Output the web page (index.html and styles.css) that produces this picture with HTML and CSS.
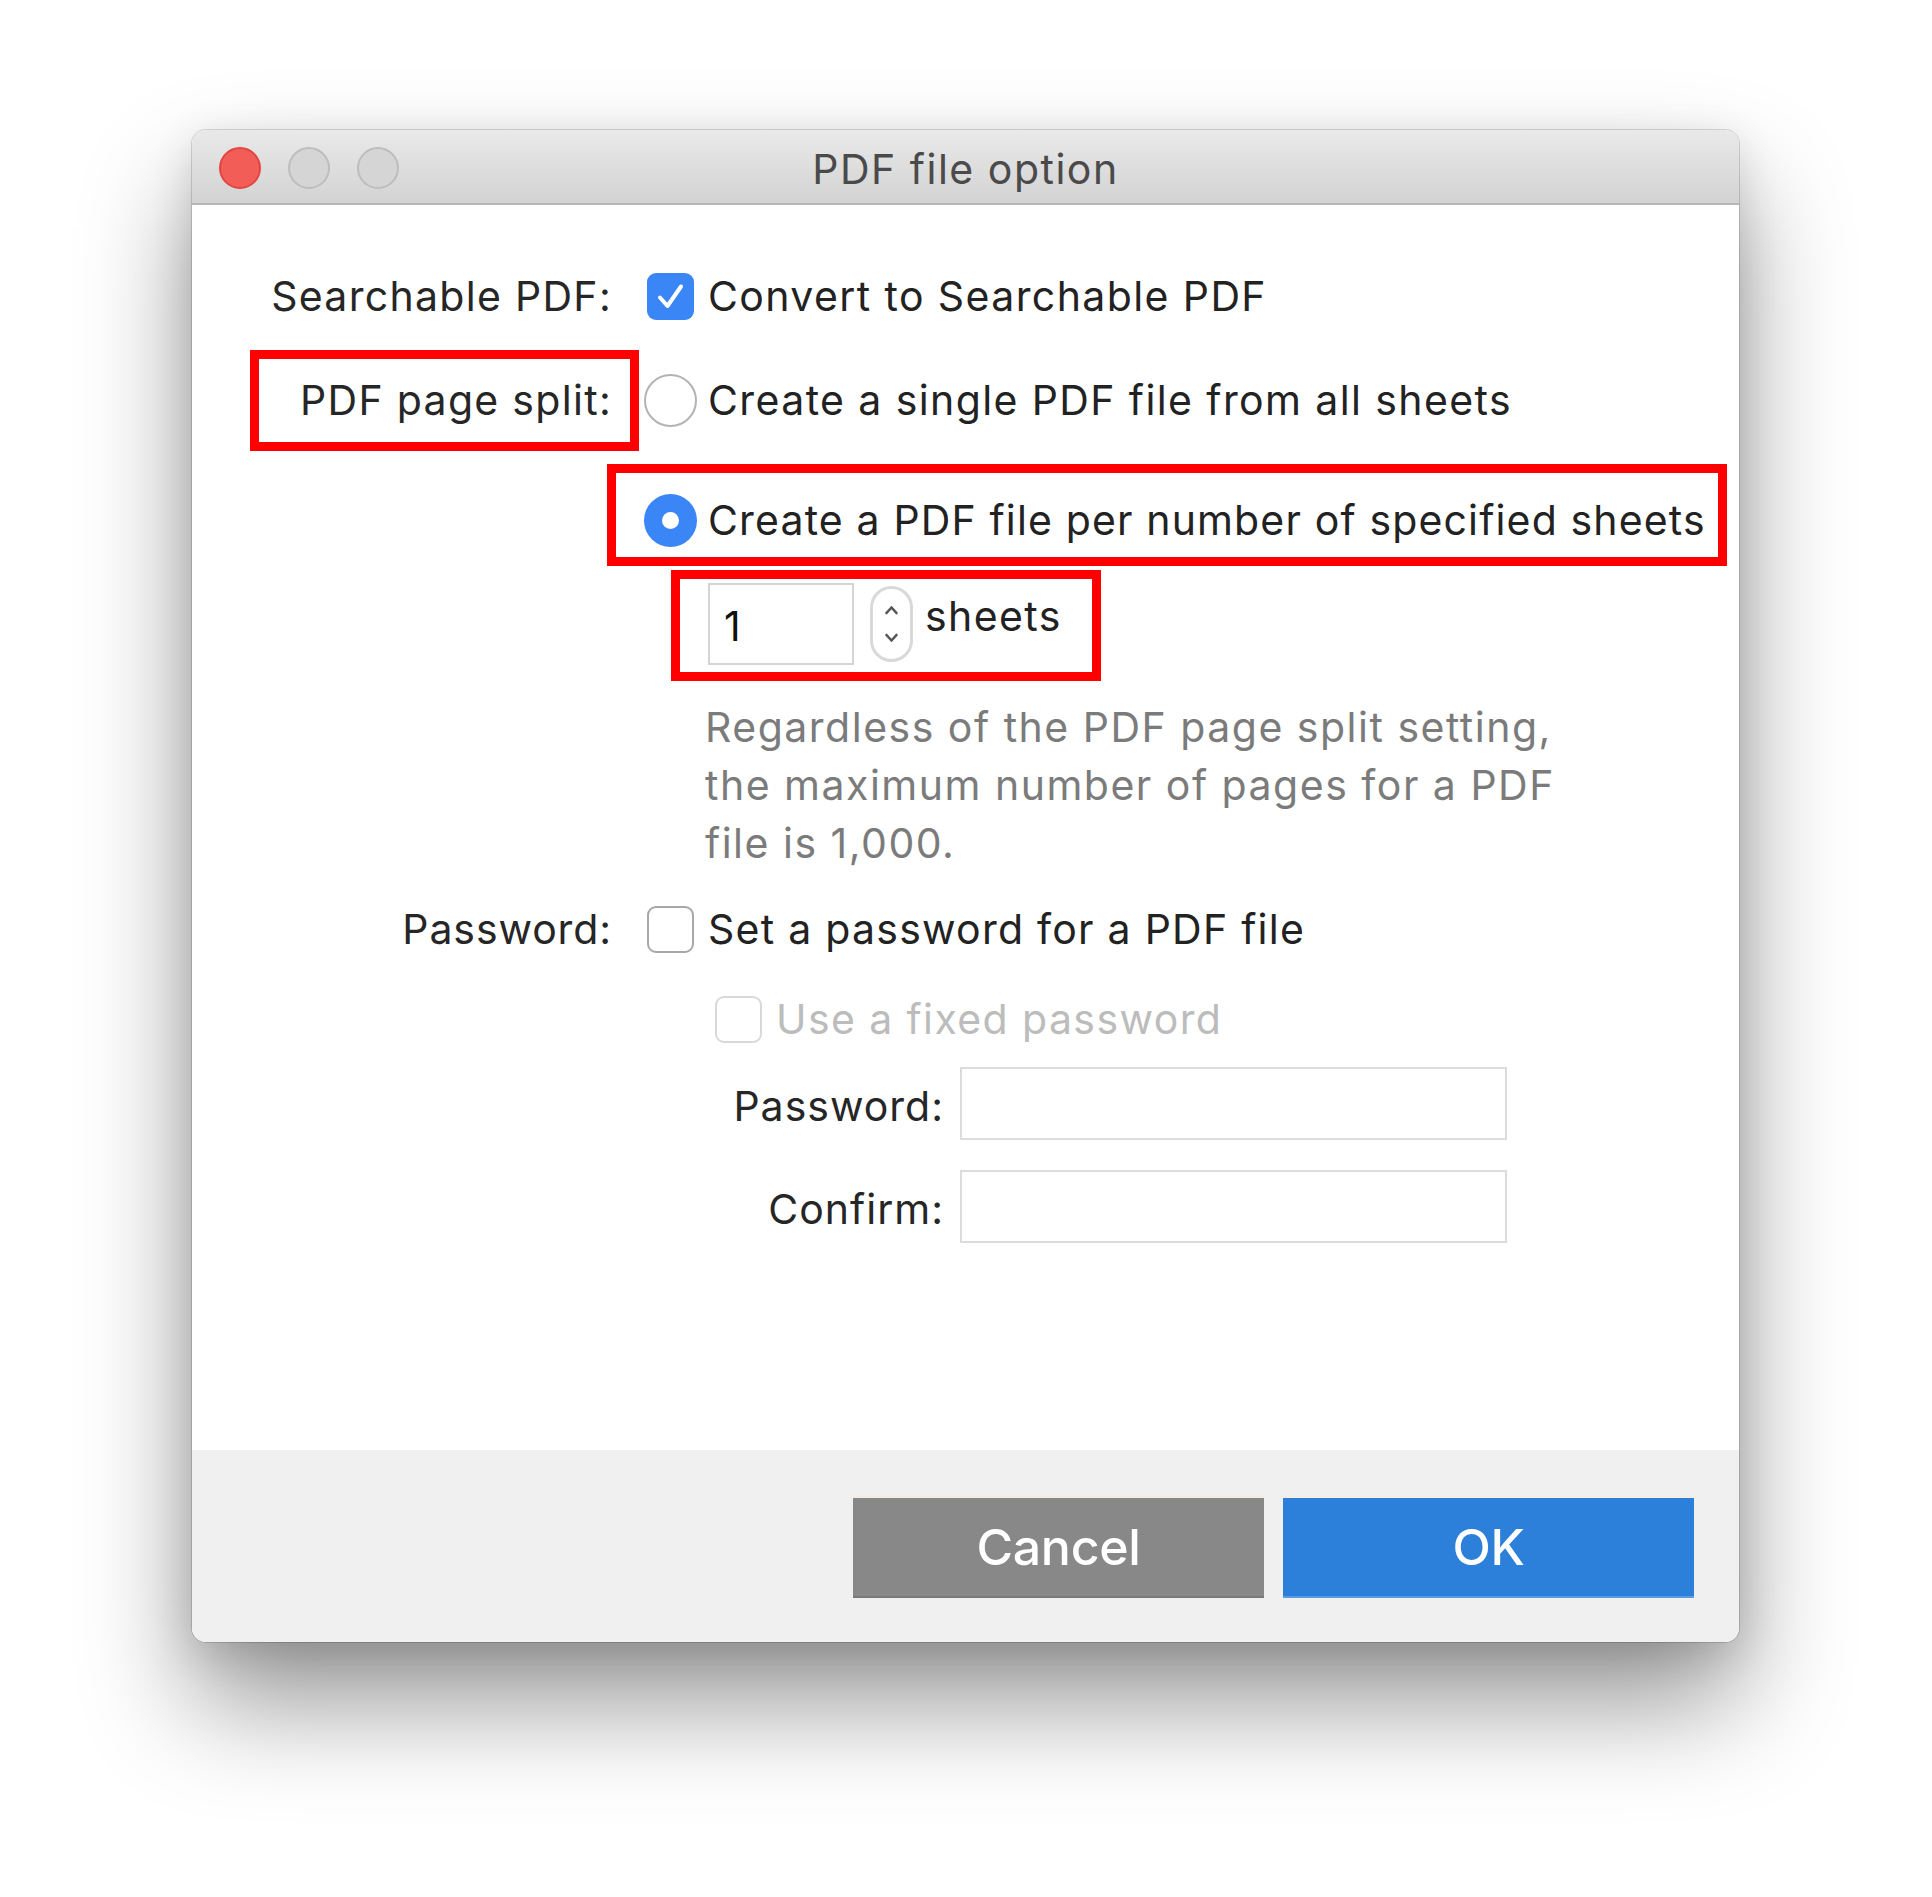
FILE: index.html
```html
<!DOCTYPE html>
<html lang="en">
<head>
<meta charset="utf-8">
<title>PDF file option</title>
<link rel="stylesheet" href="styles.css">
</head>
<body>
<div class="window">
  <div class="titlebar">
    <div class="lights">
      <span class="light close"></span>
      <span class="light"></span>
      <span class="light"></span>
    </div>
    <div class="title">PDF file option</div>
    <div class="spacer"></div>
  </div>

  <div class="content">
    <div class="row r1">
      <div class="label">Searchable PDF:</div>
      <div class="ctrl">
        <span class="ind"><span class="checkbox checked">
          <svg viewBox="0 0 47 47" width="47" height="47"><path d="M13 24.5 L20.5 33 L34 13.5" fill="none" stroke="#fff" stroke-width="4" stroke-linecap="round" stroke-linejoin="round"/></svg>
        </span></span>
        <span class="text">Convert to Searchable PDF</span>
      </div>
    </div>

    <div class="row r2">
      <div class="label">PDF page split:</div>
      <div class="ctrl">
        <span class="ind"><span class="radio"></span></span>
        <span class="text">Create a single PDF file from all sheets</span>
      </div>
    </div>

    <div class="row r3">
      <div class="label"></div>
      <div class="ctrl">
        <span class="ind"><span class="radio on"><span class="dot"></span></span></span>
        <span class="text tight">Create a PDF file per number of specified sheets</span>
      </div>
    </div>

    <div class="row sheets">
      <div class="label"></div>
      <div class="ctrl">
        <div class="numbox">1</div>
        <span class="stepper">
          <svg viewBox="0 0 43 76" width="43" height="76"><rect x="1.5" y="1.5" width="40" height="73" rx="20" fill="#fff" stroke="#d9d9d9" stroke-width="3"/><path d="M16.5 27 L21.5 21.5 L26.5 27" fill="none" stroke="#555" stroke-width="2.6" stroke-linecap="round" stroke-linejoin="round"/><path d="M16.5 49 L21.5 54.5 L26.5 49" fill="none" stroke="#555" stroke-width="2.6" stroke-linecap="round" stroke-linejoin="round"/></svg>
        </span>
        <span class="text">sheets</span>
      </div>
    </div>

    <div class="row note">
      <div class="label"></div>
      <p class="notetext">Regardless of the PDF page split setting,<br>the maximum number of pages for a PDF<br>file is 1,000.</p>
    </div>

    <div class="row r4">
      <div class="label short">Password:</div>
      <div class="ctrl">
        <span class="ind"><span class="checkbox"></span></span>
        <span class="text mid">Set a password for a PDF file</span>
      </div>
    </div>

    <div class="row r5">
      <div class="label"></div>
      <div class="ctrl sub">
        <span class="ind"><span class="checkbox disabled"></span></span>
        <span class="text dis">Use a fixed password</span>
      </div>
    </div>

    <div class="field f1">
      <div class="flabel">Password:</div>
      <div class="finput"></div>
    </div>
    <div class="field f2">
      <div class="flabel">Confirm:</div>
      <div class="finput"></div>
    </div>
  </div>

  <div class="footer">
    <button class="btn cancel">Cancel</button>
    <button class="btn ok">OK</button>
  </div>

  <div class="mark m1"></div>
  <div class="mark m2"></div>
  <div class="mark m3"></div>
</div>
</body>
</html>
```

FILE: styles.css
```css
* { box-sizing: border-box; }
html, body { margin: 0; background: #fff; }
body {
  padding: 130px 0 0 192px;
  font-family: Inter, "Liberation Sans", sans-serif;
  color: #222;
  width: 1932px;
  height: 1897px;
  overflow: hidden;
}

.window {
  position: relative;
  width: 1547px;
  height: 1512px;
  background: #fff;
  border-radius: 14px;
  box-shadow: 0 0 0 1px rgba(0,0,0,0.14), 0 60px 110px rgba(0,0,0,0.42), 0 10px 40px rgba(0,0,0,0.12);
  display: flex;
  flex-direction: column;
}

.titlebar {
  height: 75px;
  border-radius: 14px 14px 0 0;
  background: linear-gradient(#e9e9e9, #d3d3d3);
  border-bottom: 2px solid #b6b6b6;
  display: grid;
  grid-template-columns: 1fr auto 1fr;
  align-items: center;
}
.lights {
  display: flex;
  gap: 27px;
  padding-left: 27px;
  padding-top: 2px;
}
.light {
  width: 42px;
  height: 42px;
  border-radius: 50%;
  background: #d5d5d5;
  border: 2px solid #bdbdbd;
}
.light.close {
  background: #f25e57;
  border-color: #e14640;
}
.title {
  font-size: 41px;
  color: #4a4a4a;
  letter-spacing: 1.5px;
  padding-top: 4px;
}

.content {
  flex: 1;
  padding-top: 61px;
}

.row {
  display: flex;
  align-items: center;
}
.label {
  width: 420px;
  flex: none;
  text-align: right;
  font-size: 41px;
  letter-spacing: 1.3px;
  color: #262626;
}
.label.short { letter-spacing: 0.9px; }
.ctrl {
  display: flex;
  align-items: center;
  margin-left: 31px;
}
.ind {
  width: 54px;
  height: 54px;
  display: flex;
  align-items: center;
  justify-content: center;
  flex: none;
}
.text {
  margin-left: 11px;
  font-size: 41px;
  letter-spacing: 1.4px;
  color: #222;
  white-space: nowrap;
}
.text.tight { letter-spacing: 1.15px; }
.text.mid { letter-spacing: 1.25px; }
.text.dis { color: #bcbcbc; }

.checkbox {
  width: 47px;
  height: 47px;
  border-radius: 9px;
  border: 2.5px solid #a8a8a8;
  background: #fff;
  display: block;
}
.checkbox.checked {
  background: #3b86f6;
  border: none;
}
.checkbox.checked svg { display: block; }
.checkbox.disabled { border-color: #d9d9d9; }

.radio {
  width: 53px;
  height: 53px;
  border-radius: 50%;
  border: 2.5px solid #b3b3b3;
  background: #fff;
  display: flex;
  align-items: center;
  justify-content: center;
}
.radio.on {
  background: #3b86f6;
  border: none;
}
.radio .dot {
  width: 17px;
  height: 17px;
  border-radius: 50%;
  background: #fff;
}

.r1 { height: 60px; }
.r2 { height: 60px; margin-top: 44px; }
.r3 { height: 60px; margin-top: 60px; }
.sheets { height: 82px; margin-top: 33px; }
.sheets .ctrl { margin-left: 96px; }
.numbox {
  width: 146px;
  height: 82px;
  border: 2px solid #d4d4d4;
  font-size: 41px;
  color: #111;
  padding-left: 14px;
  display: flex;
  align-items: center;
  padding-top: 4px;
}
.stepper { margin-left: 16px; display: block; height: 76px; }
.stepper svg { display: block; }
.sheets .text { margin-left: 12px; margin-top: -16px; }

.note { margin-top: 33px; }
.notetext {
  margin: 0 0 0 93px;
  font-size: 41px;
  line-height: 58px;
  letter-spacing: 1.5px;
  color: #7b7b7b;
}

.r4 { height: 60px; margin-top: 27px; }
.r5 { height: 60px; margin-top: 30px; }
.ctrl.sub { margin-left: 99px; }

.field {
  display: flex;
  align-items: center;
  height: 73px;
}
.f1 { margin-top: 18px; }
.f2 { margin-top: 30px; }
.flabel {
  width: 752px;
  text-align: right;
  font-size: 41px;
  letter-spacing: 1.0px;
  color: #262626;
  flex: none;
  padding-top: 4px;
}
.finput {
  margin-left: 16px;
  width: 547px;
  height: 73px;
  border: 2px solid #dcdcdc;
  background: #fff;
}

.footer {
  height: 192px;
  background: #f0f0f0;
  border-radius: 0 0 14px 14px;
  display: flex;
  justify-content: flex-end;
  gap: 19px;
  padding: 46px 45px 0 0;
}
.btn {
  width: 411px;
  height: 102px;
  border: none;
  border-radius: 0;
  font-family: Inter, "Liberation Sans", sans-serif;
  font-size: 50px;
  font-weight: 500;
  color: #fff;
  letter-spacing: -0.3px;
  padding: 0;
}
.btn.cancel {
  background: #888888;
  border-top: 2px solid #f5ede4;
  border-bottom: 2px solid #7a7a7a;
}
.btn.ok {
  background: #2c80da;
  border-top: 2px solid #f5ede4;
  border-bottom: 2px solid #5a9be3;
}

.mark {
  position: absolute;
  border: 9px solid #ff0000;
  pointer-events: none;
}
.m1 { left: 58px; top: 220px; width: 389px; height: 101px; }
.m2 { left: 415px; top: 334px; width: 1120px; height: 102px; }
.m3 { left: 479px; top: 440px; width: 430px; height: 111px; }
```
